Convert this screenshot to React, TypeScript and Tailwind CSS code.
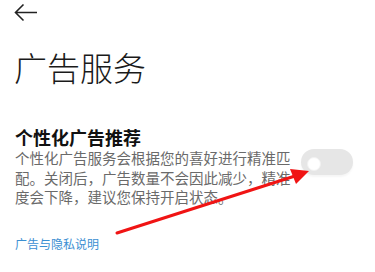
import React from 'react';

const font = { fontFamily: '"Noto Sans CJK SC", "Noto Sans", sans-serif' };

export default function App() {
  return (
    <div className="relative w-[375px] h-[272px] bg-white overflow-hidden" style={font}>
      <div className="px-[15px]">
        <button className="block mt-[3px] -ml-[1px]">
          <svg width="24" height="20" viewBox="0 0 24 20" fill="none" stroke="#222" strokeWidth="1.6">
            <path d="M23 9.5H1.5M9.5 1.5L1.5 9.5L9.5 17.5" />
          </svg>
        </button>

        <h1 className="mt-[24px] text-[33px] leading-[40px] font-light text-[#1a1a1a] -ml-[1px]">广告服务</h1>

        <div className="mt-[40px] flex items-start">
          <div className="w-[280px]">
            <h2 className="text-[18px] leading-[20px] font-bold text-[#111]">个性化广告推荐</h2>
            <p className="mt-[1px] text-[14.5px] leading-[19.5px] text-[#6a6a6a]">
              个性化广告服务会根据您的喜好进行精准匹配。关闭后，广告数量不会因此减少，精准度会下降，建议您保持开启状态。
            </p>
          </div>
          <div className="ml-auto mr-[7px] mt-[22px] w-[52px] h-[26px] rounded-full bg-[#e6e6e6] flex items-center pl-[6px] shadow-[0_2px_2px_rgba(0,0,0,0.04)]">
            <div className="w-[14px] h-[14px] rounded-full bg-white border border-[#f2f2f2] mt-[3px]" />
          </div>
        </div>

        <a className="block mt-[28px] text-[12px] leading-[18px] text-[#3b8fd2]">广告与隐私说明</a>
      </div>

      <svg className="absolute inset-0 pointer-events-none" width="375" height="272">
        <line x1="117" y1="233" x2="295" y2="176" stroke="#f01414" strokeWidth="3" strokeLinecap="round" />
        <polygon points="309,171 290,169 296,184" fill="#f01414" />
      </svg>
    </div>
  );
}
